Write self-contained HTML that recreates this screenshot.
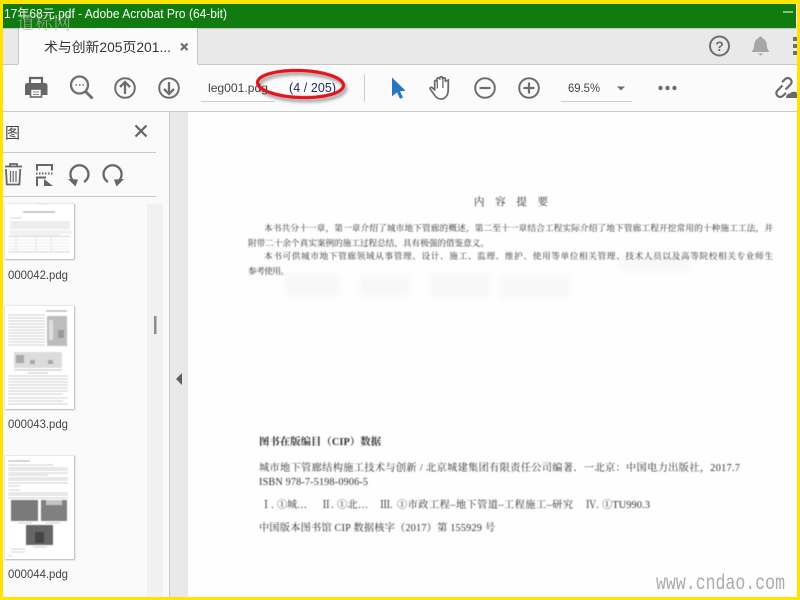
<!DOCTYPE html>
<html lang="zh"><head><meta charset="utf-8"><title>Adobe Acrobat Pro</title>
<style>
html,body{margin:0;padding:0;width:800px;height:600px;overflow:hidden;background:#fff}
svg{position:absolute;left:0;top:0;display:block}
</style></head><body>
<svg width="800" height="600" viewBox="0 0 800 600" xmlns="http://www.w3.org/2000/svg" font-family="'Liberation Sans','Noto Sans CJK SC',sans-serif">
<defs>
<filter id="b1" x="-5%" y="-50%" width="110%" height="200%"><feGaussianBlur stdDeviation="0.4"/></filter>
<filter id="b4" x="-5%" y="-5%" width="110%" height="110%"><feGaussianBlur stdDeviation="0.55"/></filter>
<filter id="b2" x="-10%" y="-10%" width="120%" height="120%"><feGaussianBlur stdDeviation="0.7"/></filter>
<filter id="b3" x="-10%" y="-50%" width="120%" height="200%"><feGaussianBlur stdDeviation="3"/></filter>
<filter id="sh" x="-20%" y="-60%" width="140%" height="220%"><feDropShadow dx="2" dy="3" stdDeviation="1.6" flood-color="#000" flood-opacity=".4"/></filter>
</defs>

<!-- base -->
<rect x="3" y="4" width="794" height="24" fill="#107c10"/>
<rect x="3" y="28" width="794" height="36" fill="#e9e9e9"/>
<rect x="3" y="28" width="794" height="1" fill="#c8c8c8"/>
<rect x="3" y="64" width="794" height="1" fill="#c6c6c6"/>
<rect x="18" y="28" width="180" height="37" fill="#fbfbfb"/>
<rect x="18" y="28" width="1" height="36" fill="#c8c8c8"/>
<rect x="197" y="28" width="1" height="36" fill="#c8c8c8"/>
<rect x="3" y="65" width="794" height="46" fill="#fbfbfb"/>
<rect x="3" y="111" width="794" height="1" fill="#c9c9c9"/>
<rect x="188" y="112" width="609" height="488" fill="#fefefe"/>

<!-- left panel / gutter -->
<rect x="3" y="112" width="166" height="488" fill="#fafafa"/>
<rect x="147" y="204" width="16" height="396" fill="#f1f1f1"/>
<rect x="169" y="112" width="1" height="488" fill="#c8c8c8"/>
<rect x="170" y="112" width="18" height="488" fill="#e9e9e9"/>
<rect x="154" y="316" width="2.500" height="18" fill="#8c8c8c"/>
<path d="M182 373v12l-6-6z" fill="#5e5e5e"/>

<!-- title -->
<text x="4" y="18" font-size="12.500" fill="#fff" textLength="223" lengthAdjust="spacingAndGlyphs">17年68元.pdf - Adobe Acrobat Pro (64-bit)</text>
<text x="17" y="29" font-size="17.500" fill="#a9b8a6" fill-opacity=".75" font-family="'Noto Serif CJK SC',serif" textLength="54">道标网</text>
<rect x="783" y="11.500" width="10" height="1" fill="#fff"/>
<rect x="796" y="4" width="1" height="24" fill="#fff"/>

<!-- tab -->
<text x="44" y="52" font-size="13.500" fill="#333" textLength="127" lengthAdjust="spacingAndGlyphs">术与创新205页201...</text>
<path d="M181 43.500l6.500 6.500M187.500 43.500l-6.500 6.500" stroke="#666" stroke-width="2" fill="none"/>

<!-- top right -->
<circle cx="719.500" cy="46" r="9.500" fill="none" stroke="#6e6e6e" stroke-width="2"/>
<text x="719.500" y="51" font-size="14" font-weight="bold" text-anchor="middle" fill="#6e6e6e">?</text>
<path d="M760.500 36.500c1.200 0 1.800.8 1.800 1.700 3.300 1 4.200 3.500 4.500 7 .2 2.800 1.200 5 2.700 6.800h-18c1.500-1.800 2.500-4 2.700-6.800.3-3.500 1.200-6 4.500-7 0-.9.600-1.700 1.800-1.700z" fill="#a6a6a6"/>
<path d="M758 53.500h5l-2.500 2.200z" fill="#a6a6a6"/>
<rect x="793" y="37" width="4" height="4" fill="#6e6e6e"/><rect x="793" y="44" width="4" height="4" fill="#6e6e6e"/><rect x="793" y="51" width="4" height="4" fill="#6e6e6e"/>

<!-- toolbar: print -->
<path d="M30 84v-6h12v6" fill="none" stroke="#666" stroke-width="2.200"/>
<path d="M27 83h18a2.500 2.500 0 0 1 2.500 2.500v9.500H25v-9.500A2.500 2.500 0 0 1 27 83z" fill="#666"/>
<rect x="30.500" y="89" width="11" height="8" fill="#fbfbfb" stroke="#666" stroke-width="1.600"/>
<path d="M33 92h6M33 94.500h6" stroke="#888" stroke-width="1"/>
<!-- zoom -->
<circle cx="79.500" cy="85" r="8.500" fill="none" stroke="#6e6e6e" stroke-width="2.300"/>
<path d="M85.500 91.500l7 7" stroke="#6e6e6e" stroke-width="2.800" fill="none"/>
<path d="M75.500 85h1.500M79 85h1.500M82.500 85h1.500" stroke="#6e6e6e" stroke-width="1.500"/>
<!-- up / down -->
<circle cx="125" cy="88" r="9.800" fill="none" stroke="#6e6e6e" stroke-width="2"/>
<path d="M125 94v-11.500M120 87l5-5 5 5" fill="none" stroke="#6e6e6e" stroke-width="2.300"/>
<circle cx="169" cy="88" r="9.800" fill="none" stroke="#6e6e6e" stroke-width="2"/>
<path d="M169 82v11.500M164 89l5 5 5-5" fill="none" stroke="#6e6e6e" stroke-width="2.300"/>

<!-- page box -->
<text x="208" y="92" font-size="12" fill="#444" textLength="60" lengthAdjust="spacingAndGlyphs">leg001.pdg</text>
<rect x="201" y="101" width="74" height="1" fill="#ccc"/>
<text x="289" y="92" font-size="12.500" fill="#1f2a60" textLength="47" lengthAdjust="spacing">(4 / 205)</text>
<ellipse cx="300.500" cy="84" rx="43" ry="13.500" fill="none" stroke="#e0131a" stroke-width="3.200" filter="url(#sh)" transform="rotate(2 300.500 84)"/>
<rect x="364" y="74" width="1" height="28" fill="#ccc"/>

<!-- cursor, hand -->
<path d="M392 77.500l13.500 13.200-5.500.6 3 6.200-3 1.200-3-6.300-5 4z" fill="#2a74c6"/>
<path d="M434.500 95c-1.500-2.400-3.500-4.300-4.300-6-.6-1.300 1-2.300 2-1.400l2.500 2.400V81.500c0-1.500 2.300-1.500 2.300 0v-2.500c0-1.500 2.800-1.500 2.800 0v-1c0-1.500 2.800-1.500 2.800 0v1c0-1.500 2.800-1.500 2.800 0v2.500c0-1.400 2.800-1.400 2.800 0V90c0 5-2.800 9-7.200 9-3.200 0-5-1.500-6.500-4z" fill="#fff" stroke="#6a6a6a" stroke-width="1.700" stroke-linejoin="round"/>
<path d="M437.300 81.500v7M442.900 78v10M448.500 79v9" stroke="#6a6a6a" stroke-width="1.300" fill="none"/>

<!-- zoom -/+ -->
<circle cx="485" cy="88" r="9.800" fill="none" stroke="#6e6e6e" stroke-width="2"/>
<path d="M479.500 88h11" stroke="#6e6e6e" stroke-width="2.200"/>
<circle cx="529" cy="88" r="9.800" fill="none" stroke="#6e6e6e" stroke-width="2"/>
<path d="M523.500 88h11M529 82.500v11" stroke="#6e6e6e" stroke-width="2.200"/>
<text x="568" y="92" font-size="12" fill="#444" textLength="32" lengthAdjust="spacingAndGlyphs">69.5%</text>
<path d="M617 86.500h8l-4 4z" fill="#6e6e6e"/>
<rect x="561" y="101" width="71" height="1" fill="#ccc"/>
<circle cx="660.500" cy="88" r="2.200" fill="#6e6e6e"/><circle cx="667.500" cy="88" r="2.200" fill="#6e6e6e"/><circle cx="674.500" cy="88" r="2.200" fill="#6e6e6e"/>

<!-- link + cloud -->
<path d="M782.500 85.500l-5 5a3.800 3.800 0 0 0 5.400 5.400l3-3M785.500 89.500l5-5a3.800 3.800 0 0 0-5.400-5.400l-3 3" fill="none" stroke="#6a6a6a" stroke-width="2.200"/>
<path d="M786 98c0-3 2-4.500 4-4.500 1-2 6-2.500 7-.5v5z" fill="#6a6a6a"/>

<!-- sidebar header -->
<text x="5" y="138" font-size="15" fill="#444">图</text>
<path d="M135.500 125.500l11 11M146.500 125.500l-11 11" stroke="#666" stroke-width="2.200" fill="none"/>
<rect x="3" y="152" width="153" height="1" fill="#c8c8c8"/>
<rect x="3" y="196" width="153" height="1" fill="#c8c8c8"/>
<!-- trash -->
<path d="M5 166.500h17M10 166v-2h7v2" fill="none" stroke="#666" stroke-width="1.800"/>
<path d="M6 169l.8 15.500h12.600l.9-15.500" fill="none" stroke="#666" stroke-width="1.800"/>
<path d="M10.500 171v11M13.200 171v11M16 171v11" stroke="#666" stroke-width="1.200"/>
<!-- extract -->
<path d="M37 164v6.500M52 164v6.500M37 165h15.500" stroke="#666" stroke-width="2" fill="none"/>
<path d="M36 173.500h1.500M39 173.500h1.500M42 173.500h1.500M45 173.500h1.500M48 173.500h1.500M51 173.500h1.500" stroke="#666" stroke-width="2"/>
<path d="M37 186v-8.500h9" fill="none" stroke="#666" stroke-width="2"/>
<path d="M44 186v-7l9 7z" fill="#666"/>
<!-- rotate -->
<path d="M72.500 180a9 9 0 1 1 11.500 2" fill="none" stroke="#666" stroke-width="2.300"/>
<path d="M68 179l10 .5-2.500 7z" fill="#666"/>
<path d="M119.500 180a9 9 0 1 0-11.500 2" fill="none" stroke="#666" stroke-width="2.300"/>
<path d="M124 179l-10 .5 2.500 7z" fill="#666"/>

<!-- thumbnail 42 -->
<rect x="5" y="204" width="70" height="56" fill="#b5b5b5" filter="url(#b2)"/>
<rect x="5" y="204" width="69" height="55" fill="#fff"/>
<g stroke="#b8b8b8" stroke-width=".6" fill="none" filter="url(#b4)">
<path d="M38 204.500h10" stroke="#ddd"/><path d="M23 212h32" stroke="#999" stroke-width="1"/>
<path d="M10 218h12"/><path d="M10 222h60M10 224h60M10 226h60M10 228h60"/>
<path d="M10 231h62M10 233h62M10 235h50" stroke="#ccc"/>
<path d="M8 236.500h62M8 252h62" stroke="#aaa"/>
<path d="M8 240h62M8 243h62M8 246h62M8 249h62" stroke="#ddd"/>
<path d="M16 237v15M36 237v15M51 237v15" stroke="#ddd"/>
</g>
<text x="8" y="279" font-size="12" fill="#444" textLength="60" lengthAdjust="spacingAndGlyphs">000042.pdg</text>

<!-- thumbnail 43 -->
<rect x="5" y="306" width="70" height="104" fill="#b5b5b5" filter="url(#b2)"/>
<rect x="5" y="306" width="69" height="103" fill="#fff"/>
<g filter="url(#b4)">
<path d="M46 311h21" stroke="#aaa" stroke-width="1.200"/>
<path d="M8 315h37M8 318h37M8 321h37M8 324h37M8 327h37M8 330h37M8 333h37M8 336h37M8 339h37M8 342h37M8 345h37" stroke="#c0c0c0" stroke-width=".8"/>
<rect x="47" y="316" width="20" height="30" fill="#bdbdbd"/>
<rect x="49" y="320" width="4" height="20" fill="#dedede"/>
<rect x="58" y="330" width="6" height="8" fill="#999"/>
<rect x="14" y="352" width="48" height="16" fill="#dcdcdc"/>
<rect x="16" y="355" width="8" height="8" fill="#a8a8a8"/>
<rect x="30" y="360" width="5" height="4" fill="#a8a8a8"/><rect x="48" y="360" width="5" height="4" fill="#a8a8a8"/>
<path d="M14 370h48" stroke="#aaa" stroke-width=".8"/>
<path d="M28 373h20" stroke="#c8c8c8"/>
<path d="M8 376h60M8 379h60M8 382h60M8 385h60M8 388h60M8 391h60M8 394h55M8 398h60M8 401h55M8 404h60" stroke="#c0c0c0" stroke-width=".8"/>
</g>
<text x="8" y="428" font-size="12" fill="#444" textLength="60" lengthAdjust="spacingAndGlyphs">000043.pdg</text>

<!-- thumbnail 44 -->
<rect x="5" y="456" width="70" height="104" fill="#b5b5b5" filter="url(#b2)"/>
<rect x="5" y="456" width="69" height="103" fill="#fff"/>
<g filter="url(#b4)">
<path d="M8 461h22" stroke="#aaa" stroke-width="1"/>
<path d="M8 465h45M8 468h60M8 470h60M8 473h60M8 475h40M8 478h60M8 480h60M8 483h60" stroke="#c4c4c4" stroke-width=".7"/>
<path d="M8 486h12M8 490h12M8 493h60M8 495h60M8 498h60" stroke="#c4c4c4" stroke-width=".7"/>
<rect x="11" y="500" width="27" height="21" fill="#7a7a7a"/>
<rect x="41" y="500" width="26" height="21" fill="#808080"/>
<rect x="46" y="500" width="16" height="5" fill="#c4c4c4"/>
<path d="M18 523h14M46 523h14" stroke="#ccc"/>
<rect x="26" y="525" width="27" height="20" fill="#666"/>
<rect x="35" y="532" width="9" height="11" fill="#444"/>
<path d="M33 547h14" stroke="#ccc"/>
<path d="M11 549h14M11 552h14M8 556h4" stroke="#c4c4c4" stroke-width=".7"/>
</g>
<text x="8" y="578" font-size="12" fill="#444" textLength="60" lengthAdjust="spacingAndGlyphs">000044.pdg</text>

<!-- page bleed-through -->
<g filter="url(#b3)" fill="#f8f8f8">
<rect x="285" y="274" width="55" height="22"/><rect x="360" y="276" width="50" height="20"/><rect x="430" y="274" width="60" height="24"/><rect x="500" y="276" width="70" height="22"/><rect x="620" y="255" width="70" height="16"/>
</g>

<!-- page text -->
<g font-family="'Liberation Serif','Noto Serif CJK SC',serif" fill="#2c2c2c" filter="url(#b1)">
<text x="474" y="205" font-size="10.500" fill="#2e2e2e" textLength="74" lengthAdjust="spacing">内 容 提 要</text>
<g font-size="8.700" fill="#333">
<text x="264" y="231" textLength="509" lengthAdjust="spacing">本书共分十一章，第一章介绍了城市地下管廊的概述，第二至十一章结合工程实际介绍了地下管廊工程开挖常用的十种施工工法，并</text>
<text x="248" y="246" textLength="241" lengthAdjust="spacing">附带二十余个真实案例的施工过程总结，具有极强的借鉴意义。</text>
<text x="264" y="259" textLength="509" lengthAdjust="spacing">本书可供城市地下管廊领域从事管理、设计、施工、监理、维护、使用等单位相关管理、技术人员以及高等院校相关专业师生</text>
<text x="248" y="274" textLength="41" lengthAdjust="spacing">参考使用。</text>
</g>
<text x="259" y="445" font-size="10.300" font-weight="bold" fill="#2e2e2e" textLength="122" lengthAdjust="spacing">图书在版编目（CIP）数据</text>
<g font-size="10.200" fill="#303030">
<text x="259" y="471" textLength="481" lengthAdjust="spacing">城市地下管廊结构施工技术与创新 / 北京城建集团有限责任公司编著．一北京：中国电力出版社，2017.7</text>
<text x="259" y="485" textLength="109" lengthAdjust="spacing">ISBN 978-7-5198-0906-5</text>
<text x="261" y="508">Ⅰ.</text>
<text x="277" y="508" textLength="30" lengthAdjust="spacing">①城…</text>
<text x="321" y="508">Ⅱ.</text>
<text x="337" y="508" textLength="31" lengthAdjust="spacing">①北…</text>
<text x="380" y="508">Ⅲ.</text>
<text x="397" y="508" textLength="176" lengthAdjust="spacing">①市政工程–地下管道–工程施工–研究</text>
<text x="586" y="508">Ⅳ.</text>
<text x="602" y="508" textLength="48" lengthAdjust="spacing">①TU990.3</text>
<text x="259" y="531" textLength="236" lengthAdjust="spacing">中国版本图书馆 CIP 数据核字（2017）第 155929 号</text>
</g>
</g>

<text x="656" y="589" font-size="21" fill="#ababab" font-family="'Liberation Mono',monospace" textLength="129" lengthAdjust="spacingAndGlyphs">www.cndao.com</text>

<!-- yellow frame -->
<rect x="0" y="0" width="800" height="4" fill="#ffe400"/>
<rect x="0" y="0" width="3" height="600" fill="#ffe400"/>
<rect x="797" y="0" width="3" height="600" fill="#ffe400"/>
<rect x="0" y="597" width="800" height="3" fill="#ffe400"/>
</svg>
</body></html>
